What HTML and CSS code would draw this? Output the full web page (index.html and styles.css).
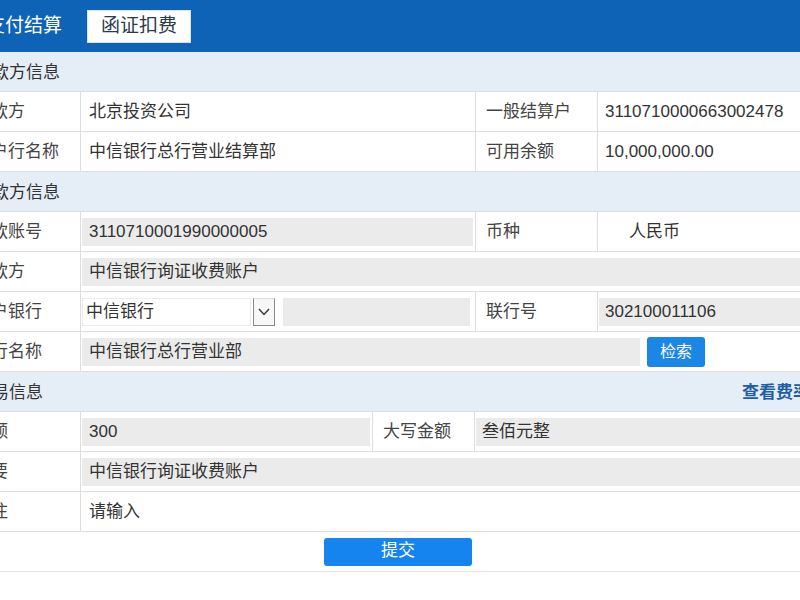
FILE: index.html
```html
<!DOCTYPE html>
<html lang="zh-CN">
<head>
<meta charset="utf-8">
<title>函证扣费</title>
<link rel="stylesheet" href="styles.css">
</head>
<body>
<div class="page">
  <div class="topbar">
    <span class="tab-title">支付结算</span>
    <span class="tab">函证扣费</span>
  </div>

  <div class="section"><span>付款方信息</span></div>
  <div class="row r-std">
    <div class="lbl">付款方</div>
    <div class="cell"><span class="txt">北京投资公司</span></div>
    <div class="cell lbl2">一般结算户</div>
    <div class="cell"><span class="txt2">3110710000663002478</span></div>
  </div>
  <div class="row r-std">
    <div class="lbl">开户行名称</div>
    <div class="cell"><span class="txt">中信银行总行营业结算部</span></div>
    <div class="cell lbl2">可用余额</div>
    <div class="cell"><span class="txt2">10,000,000.00</span></div>
  </div>

  <div class="section"><span>收款方信息</span></div>
  <div class="row r-std">
    <div class="lbl">收款账号</div>
    <div class="cell"><span class="inp">3110710001990000005</span></div>
    <div class="cell lbl2">币种</div>
    <div class="cell"><span class="cur">人民币</span></div>
  </div>
  <div class="row r-wide">
    <div class="lbl">收款方</div>
    <div class="cell"><span class="inp">中信银行询证收费账户</span></div>
  </div>
  <div class="row r-std">
    <div class="lbl">开户银行</div>
    <div class="cell">
      <span class="sel">中信银行</span>
      <span class="sel-btn"><svg width="12" height="8" viewBox="0 0 12 8"><polyline points="1,1 6,6.5 11,1" fill="none" stroke="#3a3a3a" stroke-width="1.5"/></svg></span>
      <span class="inp inp-side"></span>
    </div>
    <div class="cell lbl2">联行号</div>
    <div class="cell"><span class="inp inp-r">302100011106</span></div>
  </div>
  <div class="row r-wide">
    <div class="lbl">银行名称</div>
    <div class="cell">
      <span class="inp inp-name">中信银行总行营业部</span>
      <span class="btn-search">检索</span>
    </div>
  </div>

  <div class="section"><span>交易信息</span><a class="link">查看费率</a></div>
  <div class="row r-amt">
    <div class="lbl">金额</div>
    <div class="cell"><span class="inp">300</span></div>
    <div class="cell lbl2">大写金额</div>
    <div class="cell"><span class="inp inp-r">叁佰元整</span></div>
  </div>
  <div class="row r-wide">
    <div class="lbl">摘要</div>
    <div class="cell"><span class="inp">中信银行询证收费账户</span></div>
  </div>
  <div class="row r-wide">
    <div class="lbl">备注</div>
    <div class="cell"><span class="txt">请输入</span></div>
  </div>

  <div class="actions"><span class="btn-submit">提交</span></div>
</div>
</body>
</html>
```

FILE: styles.css
```css
html, body {
  margin: 0;
  padding: 0;
  overflow: hidden;
  background: #fff;
}
body {
  width: 800px;
  height: 600px;
  font-family: "Liberation Sans", "Noto Sans CJK SC", sans-serif;
  font-size: 17px;
  line-height: 1.2;
  color: #333;
}
.page {
  margin-left: -36px;
  width: 880px;
}
.topbar {
  height: 52px;
  background: #0f63b6;
  display: flex;
  align-items: center;
  padding-left: 22px;
  box-sizing: border-box;
}
.tab-title {
  color: #fff;
  font-size: 19px;
}
.tab {
  margin-left: 25px;
  width: 104px;
  height: 33px;
  background: #fff;
  border: 1px solid #d4e3f3;
  box-sizing: border-box;
  color: #2c3b4c;
  font-size: 19px;
  display: flex;
  align-items: center;
  justify-content: center;
}
.section {
  height: 40px;
  background: #e5edf7;
  border-bottom: 1px solid #d9e0e8;
  box-sizing: border-box;
  display: flex;
  align-items: center;
  justify-content: space-between;
  padding-left: 11px;
  padding-top: 3px;
  color: #333;
}
.link {
  color: #1d5ea6;
  font-weight: 600;
  margin-right: 34px;
}
.row {
  display: grid;
  height: 40px;
  border-bottom: 1px solid #dedede;
  box-sizing: border-box;
  background: #fff;
}
.r-std { grid-template-columns: 116px 395px 122px 1fr; }
.r-amt { grid-template-columns: 116px 292px 102px 1fr; }
.r-wide { grid-template-columns: 116px 1fr; }
.lbl {
  display: flex;
  align-items: center;
  padding-left: 10px;
  padding-top: 2px;
  color: #444;
  white-space: nowrap;
  overflow: hidden;
}
.cell {
  display: flex;
  align-items: center;
  min-width: 0;
  box-sizing: border-box;
  border-left: 1px solid #dedede;
  padding: 0 2px 0 1px;
  white-space: nowrap;
}
.lbl2 {
  padding-left: 10px;
  padding-top: 2px;
  color: #444;
}
.txt { padding-left: 7px; padding-top: 2px; }
.txt2 { padding-left: 6px; padding-top: 2px; }
.cur { padding-left: 30px; padding-top: 2px; }
.inp {
  flex: 1;
  height: 28px;
  background: #ebebeb;
  display: flex;
  align-items: center;
  padding-left: 7px;
  padding-top: 1px;
  box-sizing: border-box;
  white-space: nowrap;
}
.inp-r { padding-left: 6px; }
.inp-side {
  flex: 0 0 187px;
  margin-left: 8px;
}
.inp-name { flex: 0 0 558px; }
.sel {
  width: 169px;
  height: 28px;
  border: 1px solid #ececec;
  box-sizing: border-box;
  padding-left: 3px;
  padding-top: 1px;
  display: flex;
  align-items: center;
}
.sel-btn {
  width: 22px;
  height: 28px;
  margin-left: 2px;
  box-sizing: border-box;
  border: 1px solid #8a8a8a;
  border-top-color: #dcdcdc;
  background: #f7f7f7;
  display: flex;
  align-items: center;
  justify-content: center;
}
.btn-search {
  margin-left: 7px;
  width: 58px;
  height: 30px;
  background: #1a87e6;
  color: #fff;
  border-radius: 3px;
  font-size: 16px;
  display: flex;
  align-items: center;
  justify-content: center;
}
.actions {
  height: 40px;
  border-bottom: 1px solid #e2e2e2;
  box-sizing: border-box;
  display: flex;
  align-items: center;
  padding-left: 360px;
}
.btn-submit {
  width: 148px;
  height: 28px;
  background: #1684ee;
  color: #fff;
  border-radius: 3px;
  font-size: 17px;
  display: flex;
  align-items: center;
  justify-content: center;
}
```
